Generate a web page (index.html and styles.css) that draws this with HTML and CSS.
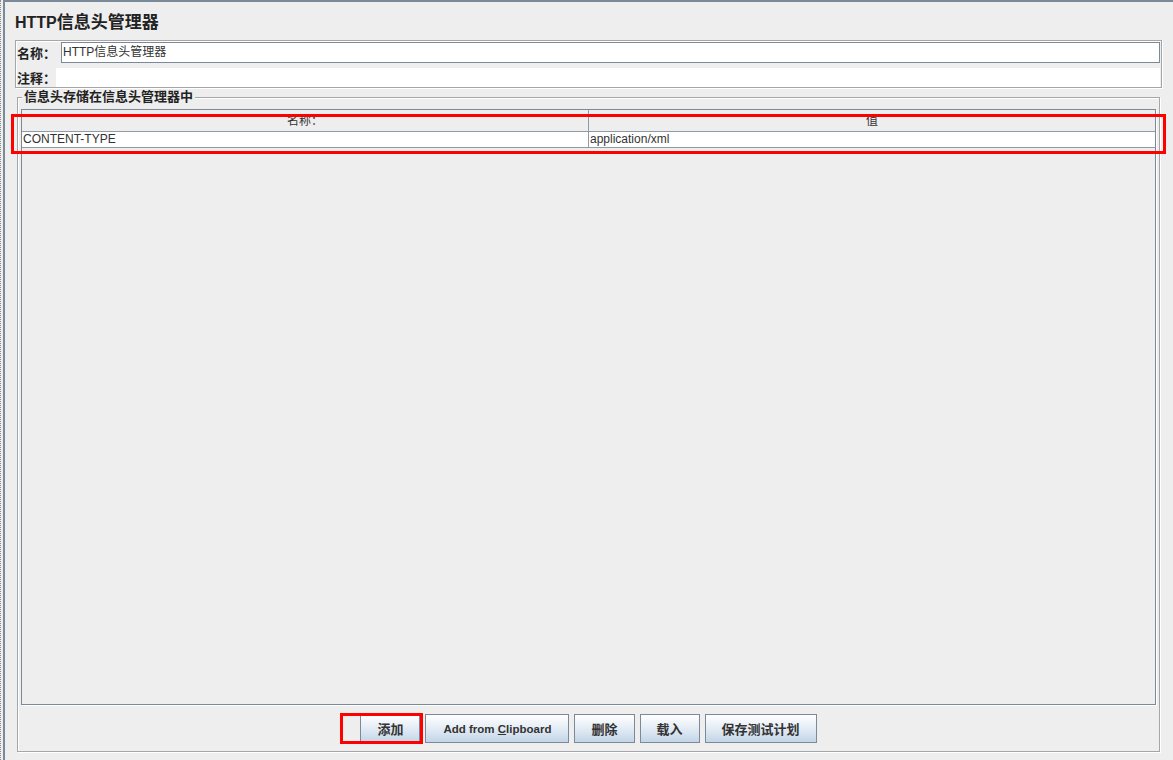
FILE: index.html
```html
<!DOCTYPE html>
<html lang="zh">
<head>
<meta charset="utf-8">
<title>HTTP信息头管理器</title>
<link rel="stylesheet" href="styles.css">
</head>
<body>
<div class="gutter"></div>
<div class="frame">
  <h1 class="title">HTTP<span class="title-cjk">信息头管理器</span></h1>
  <div class="panel">
    <div class="row row-name">
      <span class="field-label">名称：</span>
      <div class="textfield">HTTP信息头管理器</div>
    </div>
    <div class="row row-comment">
      <span class="field-label">注释：</span>
      <div class="comment"></div>
    </div>
  </div>
  <div class="group">
    <div class="group-title">信息头存储在信息头管理器中</div>
    <div class="scroll">
      <div class="grid-row header">
        <div class="cell cell-first">名称：</div>
        <div class="cell">值</div>
      </div>
      <div class="grid-row data">
        <div class="cell cell-first">CONTENT-TYPE</div>
        <div class="cell">application/xml</div>
      </div>
      <div class="annot annot-rows"></div>
    </div>
    <div class="buttons">
      <button class="btn btn-add">添加</button>
      <button class="btn btn-latin">Add from <u>C</u>lipboard</button>
      <button class="btn">删除</button>
      <button class="btn">载入</button>
      <button class="btn">保存测试计划</button>
    </div>
  </div>
</div>
</body>
</html>
```
FILE: styles.css
```css
* { box-sizing: border-box; }
html, body { margin: 0; height: 100%; }
body {
  background: #eeeeee;
  font-family: "Liberation Sans", "Noto Sans CJK SC", sans-serif;
  color: #333333;
  display: flex;
  overflow: hidden;
}
.gutter {
  flex: none;
  width: 3px;
  height: 760px;
  border-left: 1px dotted #8a8a8a;
}
.frame {
  flex: 1;
  height: 760px;
  border-top: 2px solid #7a8a99;
  border-left: 2px solid #7a8a99;
}
.title {
  margin: 0;
  padding: 9px 0 5px 10px;
  line-height: 24px;
  font-size: 16px;
  font-weight: bold;
  color: #222222;
}
.title-cjk { font-size: 17px; }
.panel {
  margin: 0 11px 0 10px;
  height: 48px;
  border: 1px solid #a6a6a6;
  box-shadow: 1px 1px 0 #ffffff, inset 1px 1px 0 #ffffff;
  padding: 1px 1px 0 1px;
}
.row { display: flex; align-items: center; }
.row-name { height: 21px; margin-bottom: 5px; }
.row-comment { height: 19px; }
.field-label {
  font-size: 13px;
  font-weight: bold;
  color: #222222;
  white-space: nowrap;
}
.textfield {
  flex: 1;
  height: 21px;
  margin-left: 5px;
  background: #ffffff;
  border: 1px solid #7a8a99;
  padding-left: 1px;
  font-size: 12px;
  line-height: 19px;
}
.comment {
  flex: 1;
  height: 19px;
  background: #ffffff;
}
.group {
  margin: 9px 13px 0 12px;
  border: 1px solid #a6a6a6;
  box-shadow: 1px 1px 0 #ffffff, inset 1px 1px 0 #ffffff;
  padding: 0 3px 8px 3px;
}
.group-title {
  display: table;
  margin: -8px 0 0 1px;
  padding: 0 2px;
  background: #eeeeee;
  font-size: 13px;
  font-weight: bold;
  line-height: 14px;
  color: #222222;
}
.scroll {
  position: relative;
  margin-top: 5px;
  height: 596px;
  border: 1px solid #7a8a99;
  box-shadow: 1px 1px 0 #ffffff;
  background: #eeeeee;
}
.grid-row {
  display: grid;
  grid-template-columns: 567px 1fr;
  font-size: 12px;
  border-bottom: 1px solid #8e9aa6;
}
.header { height: 22px; line-height: 22px; text-align: center; }
.data { height: 16px; line-height: 15px; background: #ffffff; }
.data .cell { padding-left: 1px; }
.cell { white-space: nowrap; overflow: hidden; }
.cell-first { border-right: 1px solid #8e9aa6; }
.annot {
  position: absolute;
  border: 3px solid #ff0000;
  pointer-events: none;
}
.annot-rows {
  left: -11px;
  top: 4px;
  width: 1155px;
  height: 40px;
}
.buttons {
  display: flex;
  justify-content: center;
  gap: 5px;
  margin-top: 9px;
}
.btn {
  position: relative;
  height: 29px;
  padding: 0 16px;
  border: 1px solid #7a8a99;
  border-radius: 0;
  background: linear-gradient(#ffffff 0%, #e6eef6 45%, #c3d5e8 100%);
  font-family: "Liberation Sans", "Noto Sans CJK SC", sans-serif;
  font-size: 13px;
  font-weight: bold;
  color: #333333;
  white-space: nowrap;
}
.btn-latin { font-size: 11.5px; padding: 0 17px; }
.btn-add::after {
  content: "";
  position: absolute;
  left: -21px;
  top: -2px;
  width: 83px;
  height: 31px;
  border: 3px solid #ff0000;
  box-sizing: border-box;
}
```
